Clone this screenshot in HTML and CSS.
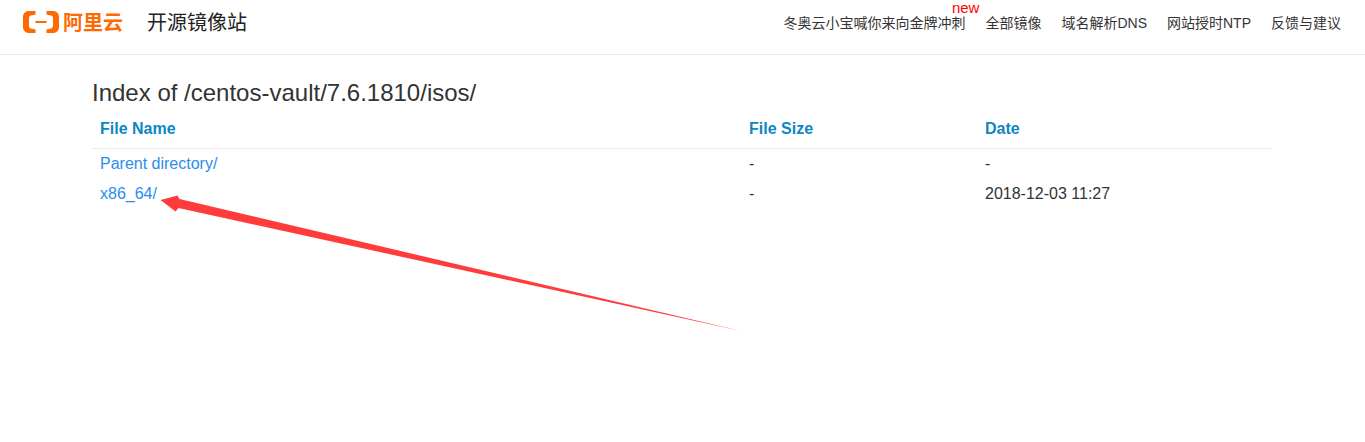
FILE: index.html
```html
<!DOCTYPE html>
<html lang="zh-CN">
<head>
<meta charset="UTF-8">
<meta name="viewport" content="width=device-width, initial-scale=1.0">
<title>Index of /centos-vault/7.6.1810/isos/</title>
<link rel="stylesheet" href="styles.css">
</head>
<body>

<header class="topbar">
  <div class="brand">
    <a class="logo" href="#">
      <svg class="logo-mark" width="36" height="22" viewBox="0 0 36 22">
        <path d="M12.500 0H6C2.500 0 0 2.500 0 6V16C0 19.500 2.500 22 6 22H12.500V18.500L8 17.500C6.800 17.200 6 16.300 6 15V7C6 5.700 6.800 4.800 8 4.500L12.500 3.500Z" fill="#ff6a00"/>
        <path d="M23.500 0H30C33.500 0 36 2.500 36 6V16C36 19.500 33.500 22 30 22H23.500V18.500L28 17.500C29.200 17.200 30 16.300 30 15V7C30 5.700 29.200 4.800 28 4.500L23.500 3.500Z" fill="#ff6a00"/>
        <rect x="12.500" y="10" width="11" height="2" fill="#ff6a00"/>
      </svg>
      <span class="logo-text">阿里云</span>
    </a>
    <span class="site-name">开源镜像站</span>
  </div>
  <nav class="nav">
    <a href="#" class="nav-hot">冬奥云小宝喊你来向金牌冲刺<span class="badge-new">new</span></a>
    <a href="#">全部镜像</a>
    <a href="#">域名解析DNS</a>
    <a href="#">网站授时NTP</a>
    <a href="#">反馈与建议</a>
  </nav>
</header>

<div class="container">
  <h1>Index of /centos-vault/7.6.1810/isos/</h1>
  <table class="files">
    <thead>
      <tr>
        <th class="col-name">File Name</th>
        <th class="col-size">File Size</th>
        <th>Date</th>
      </tr>
    </thead>
    <tbody>
      <tr>
        <td><a href="#">Parent directory/</a></td>
        <td>-</td>
        <td>-</td>
      </tr>
      <tr>
        <td><a href="#">x86_64/</a></td>
        <td>-</td>
        <td>2018-12-03 11:27</td>
      </tr>
    </tbody>
  </table>
</div>

<!-- annotation drawn over the screenshot -->
<svg class="arrow" width="1365" height="442" viewBox="0 0 1365 442">
  <polygon points="160.500,200 177.500,195.500 179.500,199 741,331 178.500,208 175.500,211.500" fill="#ff3b3b"/>
</svg>

</body>
</html>
```

FILE: styles.css
```css
html, body {
  height: 100%;
}

body {
  margin: 0;
  font-family: "Liberation Sans", "Noto Sans CJK SC", sans-serif;
  font-size: 14px;
  color: #333;
  background: #fff;
  overflow: hidden;
}

a {
  text-decoration: none;
}

.topbar {
  display: flex;
  justify-content: space-between;
  align-items: flex-start;
  height: 54px;
  padding: 0 24px 0 23px;
  border-bottom: 1px solid #e9e9e9;
}

.brand {
  display: flex;
  align-items: center;
  height: 43px;
}

.logo {
  display: flex;
  align-items: center;
}

.logo-text {
  margin-left: 4px;
  font-size: 20px;
  font-weight: 700;
  color: #ff6a00;
}

.site-name {
  margin-left: 24px;
  font-size: 20px;
  color: #222;
}

.nav {
  display: flex;
  gap: 20px;
  padding-top: 14px;
}

.nav a {
  font-size: 14px;
  line-height: 18px;
  color: #333;
}

.nav-hot {
  position: relative;
}

.badge-new {
  position: absolute;
  top: -14px;
  right: -14px;
  color: #ff0000;
  font-size: 15px;
  line-height: 16px;
}

.container {
  width: 1180px;
  margin: 0 0 0 92px;
}

h1 {
  margin: 24px 0 0;
  font-size: 24px;
  font-weight: 400;
  line-height: 28px;
  color: #333;
}

.files {
  width: 100%;
  margin-top: 3px;
  border-collapse: collapse;
  table-layout: fixed;
  font-size: 16px;
}

.files th {
  padding: 8px;
  height: 22px;
  line-height: 22px;
  text-align: left;
  font-weight: 700;
  color: #0e85c4;
  border-bottom: 1px solid #e9e9e9;
}

.col-name {
  width: 633px;
}

.col-size {
  width: 220px;
}

.files td {
  padding: 4px 8px;
  height: 22px;
  line-height: 22px;
}

.files a {
  color: #2a8cf0;
}

.arrow {
  position: absolute;
  top: 0;
  left: 0;
  pointer-events: none;
}
```
